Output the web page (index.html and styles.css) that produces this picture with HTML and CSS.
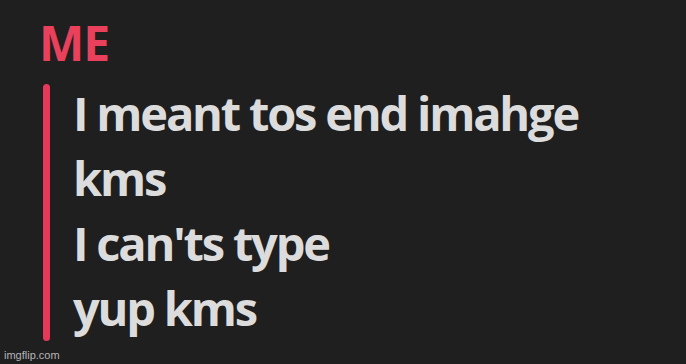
FILE: index.html
```html
<!DOCTYPE html>
<html>
<head>
<meta charset="utf-8">
<link rel="stylesheet" href="styles.css">
</head>
<body>
<div class="page">
  <div class="name">ME</div>
  <div class="group">
    <div class="bar"></div>
    <div class="lines">
      <div class="line">I meant tos end imahge</div>
      <div class="line">kms</div>
      <div class="line">I can'ts type</div>
      <div class="line">yup kms</div>
    </div>
  </div>
  <div class="mark">imgflip.com</div>
</div>
</body>
</html>
```
FILE: styles.css
```css
html, body {
  margin: 0;
  padding: 0;
  background: #1f1f20;
}
.page {
  width: 686px;
  height: 364px;
  box-sizing: border-box;
  padding: 10px 0 0 39px;
  font-family: "Open Sans", "Noto Sans", sans-serif;
  font-weight: 600;
  position: relative;
  overflow: hidden;
}
.name {
  color: #e9405b;
  font-size: 48px;
  font-weight: 700;
  line-height: 65px;
  letter-spacing: -1px;
}
.group {
  display: flex;
  margin-top: 6px;
  margin-left: 4px;
}
.bar {
  width: 7px;
  background: #e6395a;
  border-radius: 3.5px;
  margin: 3px 0 0;
}
.lines {
  margin-left: 23px;
  color: #dcdcdc;
  font-size: 47px;
  font-weight: 700;
  line-height: 65px;
  letter-spacing: -2.2px;
}
.line {
  white-space: nowrap;
}
.mark {
  position: absolute;
  left: 4px;
  bottom: 3px;
  font-family: "Liberation Sans", Arial, sans-serif;
  font-weight: 400;
  font-size: 11px;
  color: #b5b5b5;
}
```
